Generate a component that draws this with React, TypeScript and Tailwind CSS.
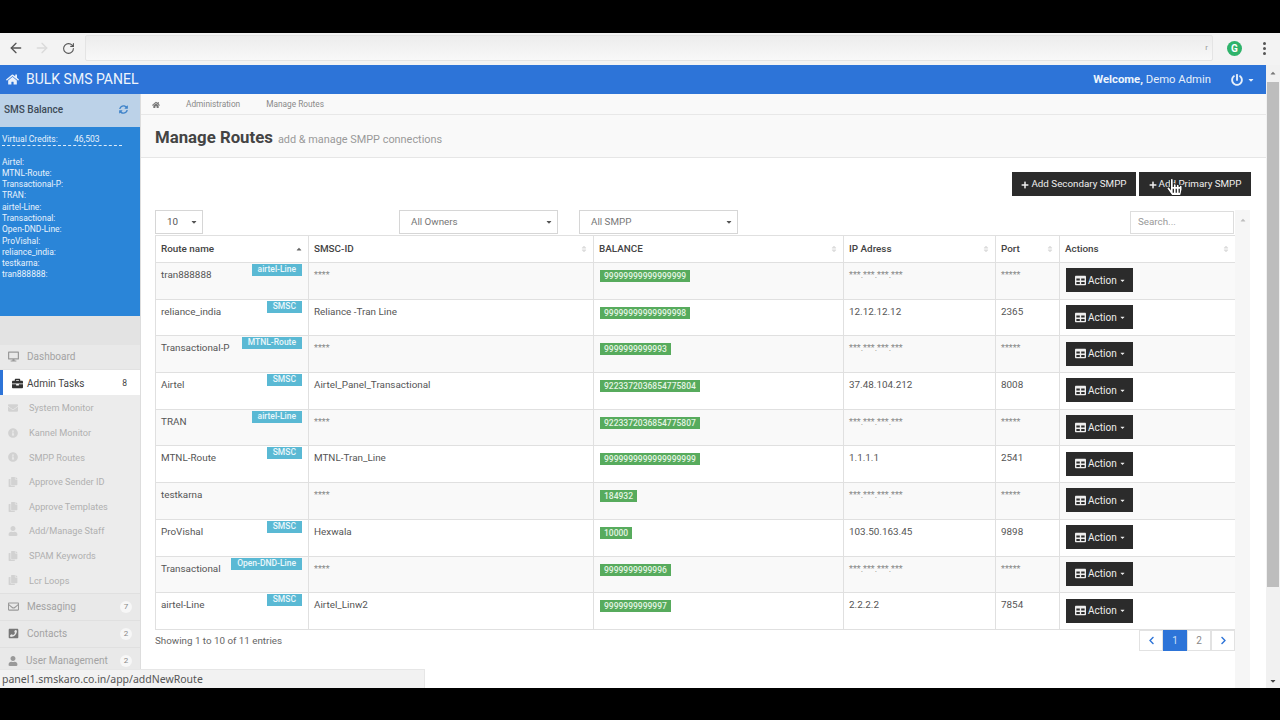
import React from 'react';
import { ArrowLeft, ArrowRight, RotateCw } from 'lucide-react';
import {
  FaHome, FaSyncAlt, FaDesktop, FaBriefcase, FaRegEnvelope, FaPhoneSquare, FaUser, FaInfoCircle,
  FaCopy, FaEnvelope, FaPlus, FaTable, FaPowerOff, FaChevronLeft, FaChevronRight, FaCaretDown, FaSort,
  FaCaretUp, FaHandPointer,
} from 'react-icons/fa';

const routes = [
  { name: 'tran888888', tag: 'airtel-Line', smsc: '****', balance: '99999999999999999', ip: '***.***.***.***', port: '*****', masked: true },
  { name: 'reliance_india', tag: 'SMSC', smsc: 'Reliance -Tran Line', balance: '99999999999999998', ip: '12.12.12.12', port: '2365' },
  { name: 'Transactional-P', tag: 'MTNL-Route', smsc: '****', balance: '9999999999993', ip: '***.***.***.***', port: '*****', masked: true },
  { name: 'Airtel', tag: 'SMSC', smsc: 'Airtel_Panel_Transactional', balance: '9223372036854775804', ip: '37.48.104.212', port: '8008' },
  { name: 'TRAN', tag: 'airtel-Line', smsc: '****', balance: '9223372036854775807', ip: '***.***.***.***', port: '*****', masked: true },
  { name: 'MTNL-Route', tag: 'SMSC', smsc: 'MTNL-Tran_Line', balance: '9999999999999999999', ip: '1.1.1.1', port: '2541' },
  { name: 'testkarna', tag: '', smsc: '****', balance: '184932', ip: '***.***.***.***', port: '*****', masked: true },
  { name: 'ProVishal', tag: 'SMSC', smsc: 'Hexwala', balance: '10000', ip: '103.50.163.45', port: '9898' },
  { name: 'Transactional', tag: 'Open-DND-Line', smsc: '****', balance: '9999999999996', ip: '***.***.***.***', port: '*****', masked: true },
  { name: 'airtel-Line', tag: 'SMSC', smsc: 'Airtel_Linw2', balance: '9999999999997', ip: '2.2.2.2', port: '7854' },
];

const balances = ['Airtel:', 'MTNL-Route:', 'Transactional-P:', 'TRAN:', 'airtel-Line:', 'Transactional:', 'Open-DND-Line:', 'ProVishal:', 'reliance_india:', 'testkarna:', 'tran888888:'];

const subMenu = [
  { label: 'System Monitor', icon: FaEnvelope },
  { label: 'Kannel Monitor', icon: FaInfoCircle },
  { label: 'SMPP Routes', icon: FaInfoCircle },
  { label: 'Approve Sender ID', icon: FaCopy },
  { label: 'Approve Templates', icon: FaCopy },
  { label: 'Add/Manage Staff', icon: FaUser },
  { label: 'SPAM Keywords', icon: FaCopy },
  { label: 'Lcr Loops', icon: FaCopy },
];

const headers = ['Route name', 'SMSC-ID', 'BALANCE', 'IP Adress', 'Port', 'Actions'];

const cellText = 'border border-[#e0e0e0] pl-[5px] pr-[6px] pt-[5px] align-top';
const cellMasked = 'border border-[#e0e0e0] pl-[5px] pr-[6px] pt-[6px] align-top text-[#888] text-[9px]';

const App: React.FC = () => {
  return (
    <div className="w-[1280px] h-[720px] bg-black flex flex-col pt-[33px] pb-[32px] overflow-hidden font-['Roboto',sans-serif] text-[#555]">
      {/* browser toolbar */}
      <div className="h-[32px] pb-[2px] bg-[#f3f3f3] flex items-center shrink-0">
        <ArrowLeft className="w-[16px] h-[16px] ml-[8px] text-[#555]" />
        <ArrowRight className="w-[16px] h-[16px] ml-[10px] text-[#dadada]" />
        <RotateCw className="w-[13px] h-[13px] ml-[12px] text-[#555]" />
        <div className="ml-[10px] w-[1128px] h-[26px] rounded-[2px] border border-[#e4e4e4] bg-gradient-to-b from-[#ececec] to-[#f8f8f8] flex items-center justify-end pr-[4px]">
          <span className="text-[8px] text-[#999]">r</span>
        </div>
        <div className="ml-[14px] w-[15px] h-[15px] rounded-full bg-[#2fb36b] text-white text-[10px] font-bold flex items-center justify-center">G</div>
        <div className="ml-[21px] flex flex-col gap-[2px]">
          <span className="w-[3px] h-[3px] rounded-full bg-[#555]" />
          <span className="w-[3px] h-[3px] rounded-full bg-[#555]" />
          <span className="w-[3px] h-[3px] rounded-full bg-[#555]" />
        </div>
      </div>

      <div className="flex-1 flex min-h-0 relative">
        <div className="w-[1266px] flex flex-col bg-white">
          {/* top nav */}
          <div className="h-[29px] bg-[#2d74d8] text-white flex items-center shrink-0">
            <FaHome className="w-[13px] h-[13px] ml-[6px] text-[#e8f0fb]" />
            <span className="ml-[7px] text-[14px] text-[#eef4fc]">BULK SMS PANEL</span>
            <span className="ml-auto pt-[2px] text-[11.3px] text-[#e6effa]"><b className="font-bold text-[#eef4fc]">Welcome,</b> Demo Admin</span>
            <FaPowerOff className="w-[12px] h-[12px] ml-[20px] text-[#e6effa]" />
            <FaCaretDown className="w-[8px] h-[8px] ml-[4px] mr-[11px] text-[#e6effa]" />
          </div>

          <div className="flex-1 flex min-h-0">
            {/* sidebar */}
            <div className="w-[141px] shrink-0 bg-[#e9e9e9] border-r border-[#dddddd] flex flex-col overflow-hidden">
              <div className="h-[33px] pb-[2px] shrink-0 bg-[#bcd2e8] flex items-center justify-between pl-[4px] pr-[12px]">
                <span className="text-[10px] font-medium text-[#3d4a57]">SMS Balance</span>
                <FaSyncAlt className="w-[9px] h-[9px] text-[#3f83c9]" />
              </div>
              <div className="h-[189px] shrink-0 bg-[#2a85d8] text-[#e8f2fc] pl-[2px] pt-[7px] text-[8.5px] leading-[11.3px]">
                <div className="w-[120px] h-[12px] flex border-b border-dashed border-[#dcebf9]">
                  <span className="w-[72px]">Virtual Credits:</span>
                  <span>46,503</span>
                </div>
                <div className="mt-[10.5px]">
                  {balances.map((b) => (
                    <div key={b}>{b}</div>
                  ))}
                </div>
              </div>
              <div className="h-[29px] shrink-0 bg-[#e3e3e3]" />
              <div className="h-[25px] pb-[1px] shrink-0 flex items-center pl-[8px] text-[10px] text-[#a3a3a3] border-b border-[#e2e2e2]">
                <FaDesktop className="w-[11px] h-[11px] text-[#9a9a9a]" />
                <span className="ml-[8px]">Dashboard</span>
              </div>
              <div className="h-[25px] pt-[1px] shrink-0 flex items-center bg-white border-l-[3px] border-[#2d74d8] pl-[9px] pr-[13px] text-[10px] text-[#444]">
                <FaBriefcase className="w-[11px] h-[11px] text-[#333]" />
                <span className="ml-[4px]">Admin Tasks</span>
                <span className="ml-auto text-[8.5px]">8</span>
              </div>
              <div className="pt-[1px] shrink-0 bg-[#ececec]">
                {subMenu.map(({ label, icon: Icon }) => (
                  <div key={label} className="h-[24.6px] flex items-center pl-[8px] text-[9.2px] text-[#b0b0b0]">
                    <Icon className="w-[10px] h-[10px] text-[#d2d2d2]" />
                    <span className="ml-[11px]">{label}</span>
                  </div>
                ))}
              </div>
              <SideItem label="Messaging" count="7" icon={<FaRegEnvelope className="w-[11px] h-[11px] text-[#999]" />} />
              <SideItem label="Contacts" count="2" icon={<FaPhoneSquare className="w-[11px] h-[11px] text-[#777]" />} />
              <SideItem label="User Management" count="2" icon={<FaUser className="w-[10px] h-[10px] text-[#999]" />} />
            </div>

            {/* page */}
            <div className="flex-1 flex flex-col min-w-0">
              <div className="h-[21px] pt-[1px] shrink-0 bg-[#f9f9f9] border-b border-[#e8e8e8] flex items-center text-[8.3px] text-[#8a8a8a]">
                <FaHome className="w-[8px] h-[8px] ml-[11px] text-[#777]" />
                <span className="ml-[26px]">Administration</span>
                <span className="ml-[26px]">Manage Routes</span>
              </div>
              <div className="h-[43px] shrink-0 bg-[#f9f9f9] border-b border-[#e6e6e6] flex items-baseline pl-[14px] pt-[11px]">
                <h1 className="text-[16.8px] leading-[22px] font-bold text-[#444]">Manage Routes</h1>
                <span className="ml-[5px] text-[10.9px] text-[#999]">add &amp; manage SMPP connections</span>
              </div>

              <div className="h-[38px] shrink-0 flex items-end justify-end gap-[3px] pr-[15px]">
                <DarkButton label="Add Secondary SMPP" width="w-[124px]" />
                <DarkButton label="Add Primary SMPP" width="w-[112px]" />
              </div>

              <div className="flex-1 min-h-0 flex mt-[14px] pl-[14px] pr-[16px]">
                <div className="w-[1080px] shrink-0 flex flex-col">
                  <div className="h-[25px] shrink-0 flex items-start text-[9.8px] text-[#777]">
                    <Select label="10" width="w-[48px]" className="text-[#555] pl-[11px]" />
                    <Select label="All Owners" width="w-[159px]" className="ml-[196px] pl-[11px]" />
                    <Select label="All SMPP" width="w-[159px]" className="ml-[21px] pl-[11px]" />
                    <div className="ml-auto mr-[1px] mt-[1px] w-[104px] h-[23px] border border-[#dddddd] flex items-center pl-[7px] text-[#999]">Search...</div>
                  </div>

                  <table className="w-[1080px] table-fixed border-collapse text-[9.9px] text-[#555]">
                    <colgroup>
                      <col className="w-[153px]" />
                      <col className="w-[285px]" />
                      <col className="w-[250px]" />
                      <col className="w-[152px]" />
                      <col className="w-[64px]" />
                      <col className="w-[176px]" />
                    </colgroup>
                    <thead>
                      <tr className="h-[27px]">
                        {headers.map((h, i) => (
                          <th key={h} className="border border-[#e0e0e0] pl-[5px] pr-[5px] pt-[1px] text-left font-medium text-[#444]">
                            <div className="flex items-center justify-between">
                              {h}
                              {i === 0 ? (
                                <FaCaretUp className="w-[8px] h-[8px] text-[#666]" />
                              ) : (
                                <FaSort className="w-[8px] h-[8px] text-[#dcdcdc]" />
                              )}
                            </div>
                          </th>
                        ))}
                      </tr>
                    </thead>
                    <tbody>
                      {routes.map((r, i) => (
                        <tr key={r.name} className={i % 2 === 0 ? 'bg-[#f9f9f9] h-[36.7px]' : 'bg-white h-[36.7px]'}>
                          <td className="border border-[#e0e0e0] pl-[5px] align-top">
                            <div className="flex justify-between items-start">
                              <span className="pt-[5px]">{r.name}</span>
                              {r.tag && (
                                <span className="mt-[1px] mr-[6px] h-[12px] px-[6px] bg-[#5ab9d4] text-[#eaf7fb] text-[8.5px] leading-[11px] font-medium">{r.tag}</span>
                              )}
                            </div>
                          </td>
                          <td className={r.masked ? cellMasked : cellText}>{r.smsc}</td>
                          <td className="border border-[#e0e0e0] pl-[6px] pr-[6px] pt-[7px] align-top">
                            <span className="block w-fit h-[12px] px-[4px] bg-[#57ab5d] text-[#e4f4e4] text-[8.5px] leading-[12px] font-medium">{r.balance}</span>
                          </td>
                          <td className={r.masked ? cellMasked : cellText}>{r.ip}</td>
                          <td className={r.masked ? cellMasked : cellText}>{r.port}</td>
                          <td className="border border-[#e0e0e0] pl-[6px] pb-[1px] align-middle">
                            <div className="w-[67px] h-[24px] bg-[#2b2b2b] text-[#eeeeee] flex items-center pl-[9px] text-[10px]">
                              <FaTable className="w-[11px] h-[11px]" />
                              <span className="ml-[2px]">Action</span>
                              <FaCaretDown className="w-[7px] h-[7px] ml-[2px]" />
                            </div>
                          </td>
                        </tr>
                      ))}
                    </tbody>
                  </table>

                  <div className="flex justify-between items-start">
                    <span className="pt-[4px] text-[9.8px] text-[#666]">Showing 1 to 10 of 11 entries</span>
                    <div className="flex h-[21px] text-[10px]">
                      <PageCell><FaChevronLeft className="w-[9px] h-[9px] text-[#2d74d8]" /></PageCell>
                      <div className="w-[24px] bg-[#2d74d8] text-[#cfe0f6] flex items-center justify-center">1</div>
                      <PageCell><span className="text-[#888]">2</span></PageCell>
                      <PageCell><FaChevronRight className="w-[9px] h-[9px] text-[#2d74d8]" /></PageCell>
                    </div>
                  </div>
                </div>
                <div className="flex-1 bg-[#f6f6f6] flex justify-center pt-[6px]">
                  <FaCaretUp className="w-[8px] h-[8px] text-[#bdbdbd]" />
                </div>
              </div>
            </div>
          </div>
        </div>

        {/* window scrollbar */}
        <div className="w-[14px] bg-[#f1f1f1] flex flex-col items-center justify-between">
          <FaCaretUp className="w-[8px] h-[8px] mt-[4px] text-[#777]" />
          <div className="absolute top-[17px] right-[1px] w-[12px] h-[505px] bg-[#bdbdbd]" />
          <FaCaretDown className="w-[8px] h-[8px] mb-[3px] text-[#444]" />
        </div>

        {/* status bubble */}
        <div className="absolute left-0 bottom-0 w-[425px] h-[19px] bg-[#f2f2f2] border-t border-r border-[#e6e6e6] pl-[2px] text-[10.5px] leading-[18px] text-[#555] font-['Noto_Sans',sans-serif]">
          panel1.smskaro.co.in/app/addNewRoute
        </div>

        {/* mouse pointer */}
        <FaHandPointer className="absolute left-[1167px] top-[112px] w-[15px] h-[20px] text-white stroke-[#222] stroke-[30px]" />
      </div>
    </div>
  );
};

const SideItem: React.FC<{ label: string; count: string; icon: React.ReactNode }> = ({ label, count, icon }) => (
  <div className="h-[27px] shrink-0 flex items-center pl-[8px] pr-[8px] bg-[#e9e9e9] border-t border-[#e0e0e0] text-[10px] text-[#a3a3a3]">
    {icon}
    <span className="ml-[8px]">{label}</span>
    <span className="ml-auto w-[12px] h-[12px] rounded-full bg-[#f7f7f7] flex items-center justify-center text-[8px] text-[#888]">{count}</span>
  </div>
);

const DarkButton: React.FC<{ label: string; width: string }> = ({ label, width }) => (
  <div className={`${width} h-[24px] pt-[1px] bg-[#2b2b2b] text-[#eeeeee] text-[9.8px] flex items-center justify-center`}>
    <FaPlus className="w-[8px] h-[8px] mr-[2px]" />
    {label}
  </div>
);

const Select: React.FC<{ label: string; width: string; className: string }> = ({ label, width, className }) => (
  <div className={`${width} ${className} h-[24px] border border-[#d6d6d6] flex items-center justify-between pr-[4px]`}>
    {label}
    <FaCaretDown className="w-[8px] h-[8px] text-[#555]" />
  </div>
);

const PageCell: React.FC<{ children: React.ReactNode }> = ({ children }) => (
  <div className="w-[24px] border border-[#e2e2e2] bg-white flex items-center justify-center">{children}</div>
);

export default App;
